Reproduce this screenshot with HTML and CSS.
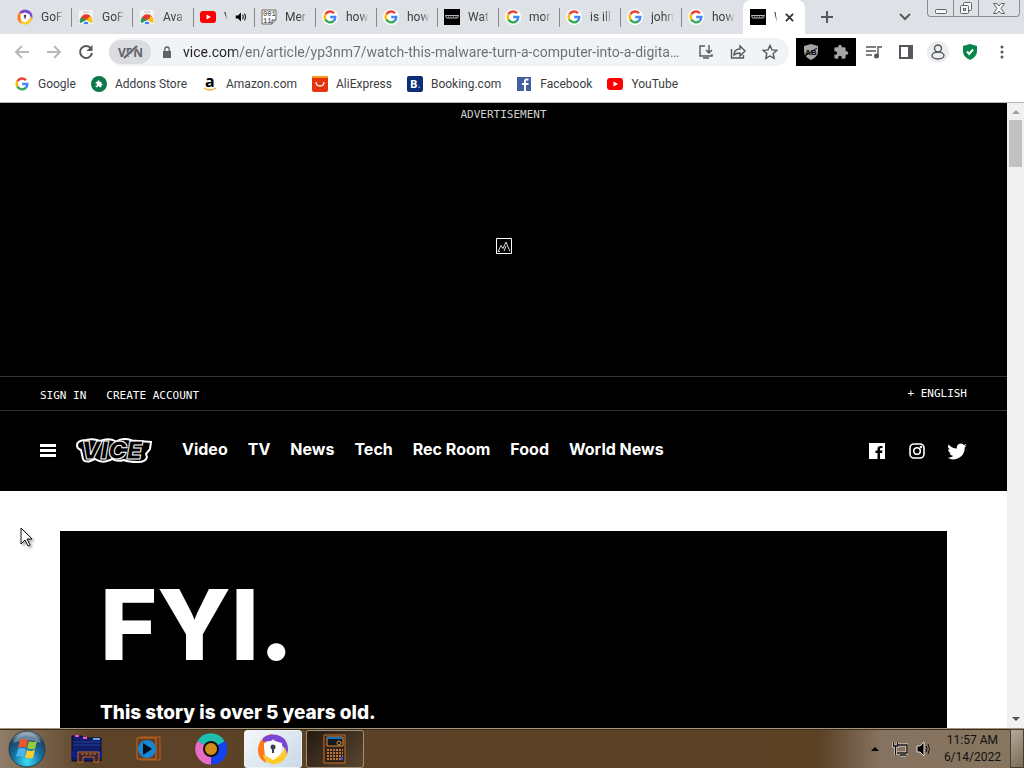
FILE: index.html
```html
<!DOCTYPE html>
<html lang="en">
<head>
<meta charset="utf-8">
<meta name="viewport" content="width=device-width, initial-scale=1">
<title>VICE</title>
<link rel="stylesheet" href="styles.css">
</head>
<body>
<svg class="sprite" aria-hidden="true">
  <symbol id="google" viewBox="0 0 16 16">
    <circle cx="8" cy="8" r="8" fill="#fff"/>
    <g fill="none" stroke-width="2.4">
      <path d="M12 4.2A5.3 5.3 0 0 0 3.4 5.3" stroke="#ea4335"/>
      <path d="M3.4 5.3a5.3 5.3 0 0 0 0 5.4" stroke="#fbbc05"/>
      <path d="M3.4 10.7a5.3 5.3 0 0 0 8.2 1.3" stroke="#34a853"/>
      <path d="M11.6 12a5.2 5.2 0 0 0 1.7-4H8.2" stroke="#4285f4"/>
    </g>
  </symbol>
  <symbol id="avast" viewBox="0 0 32 32">
    <path d="M16 1C9 1 1 7 1 17c0 6 3 10 8 13-2-8-2-16 0-21z" fill="#ff7a1a"/>
    <path d="M6 5C14-2 31 1 31 16c0 3-1 5-2 7C29 13 22 5 6 9z" fill="#7b45d6"/>
    <path d="M30 21C28 28 21 32 15 31c-5-1-8-4-9-9 9 5 19 3 22-8z" fill="#ffc928"/>
    <path d="M7 10q9-2 9-4 0 2 9 4 1 13-9 17Q6 23 7 10z" fill="#fff"/>
    <circle cx="16" cy="14" r="2.5" fill="#3a3c58"/><path d="M16 14v6" stroke="#3a3c58" stroke-width="2"/>
  </symbol>
  <symbol id="store" viewBox="0 0 16 16">
    <path d="M1 1h14v14H1z" fill="#f2f2f2"/><path d="M5 3h6" stroke="#c5c5c5"/>
    <path d="M2 14a6 6 0 0 1 3-7l3 5z" fill="#1f9d55"/>
    <path d="M3 9a5.500 5.500 0 0 1 10.500 0L8 11z" fill="#e33b2e"/>
    <path d="M14 14a6 6 0 0 0-2-7l-4 5z" fill="#fbc116"/>
    <path d="M5 15a3 3 0 0 1 6 0" fill="#4285f4" stroke="#fff"/>
  </symbol>
  <symbol id="youtube" viewBox="0 0 16 16">
    <rect y="2" width="16" height="12" rx="3" fill="#f00"/><path d="M6.500 5.500v5L11 8z" fill="#fff"/>
  </symbol>
  <symbol id="vice-mini" viewBox="0 0 16 16">
    <path d="M0 0h16v16H0z"/><path d="M1.500 6.500h13l-1 2.500H2.500z" fill="none" stroke="#ccc" stroke-width=".9"/><path d="M4 6l1 3M7 6v3M10 6l-1 3M11 8h2" stroke="#aaa" stroke-width=".7"/>
  </symbol>
  <symbol id="binary" viewBox="0 0 16 16">
    <path d="M1 1h14v10l-4 4H1z" fill="#fff" stroke="#666"/><path d="M11 15v-4h4" fill="#ccc" stroke="#555"/>
    <text x="2" y="7" font-family="Liberation Mono" font-size="7" fill="#222">001</text>
    <text x="2" y="14" font-family="Liberation Mono" font-size="7" fill="#222">11</text>
  </symbol>
  <symbol id="shield" viewBox="0 0 16 16"><path d="M8 0l7 2v5q0 6-7 9-7-3-7-9V2z"/></symbol>
  <symbol id="puzzle" viewBox="0 0 24 24"><path d="M20.500 11H19V7a2 2 0 0 0-2-2h-4V3.500a2.500 2.500 0 0 0-5 0V5H4a2 2 0 0 0-2 2v3.800h1.500a2.700 2.700 0 0 1 0 5.400H2V20a2 2 0 0 0 2 2h3.800v-1.500a2.700 2.700 0 0 1 5.400 0V22H17a2 2 0 0 0 2-2v-4h1.500a2.500 2.500 0 0 0 0-5z"/></symbol>
</svg>

<header class="browser">
  <div class="strip">
    <div class="tabs" role="tablist">
      <button class="tab" role="tab"><svg class="ico"><use href="#avast"/></svg><span class="name">GoF</span></button>
      <button class="tab" role="tab"><svg class="ico"><use href="#store"/></svg><span class="name">GoF</span></button>
      <button class="tab" role="tab"><svg class="ico"><use href="#store"/></svg><span class="name">Ava</span></button>
      <button class="tab" role="tab"><svg class="ico"><use href="#youtube"/></svg><span class="name sliver">V</span><svg class="sound" viewBox="0 0 16 16"><path d="M1 6h3l4-4v12l-4-4H1z"/><path d="M10 5q2 3 0 6M12.500 3.500q3 4.500 0 9" fill="none" stroke="#222" stroke-width="1.500"/></svg></button>
      <button class="tab" role="tab"><svg class="ico"><use href="#binary"/></svg><span class="name">Mer</span></button>
      <button class="tab" role="tab"><svg class="ico"><use href="#google"/></svg><span class="name">how</span></button>
      <button class="tab" role="tab"><svg class="ico"><use href="#google"/></svg><span class="name">how</span></button>
      <button class="tab" role="tab"><svg class="ico"><use href="#vice-mini"/></svg><span class="name">Wat</span></button>
      <button class="tab" role="tab"><svg class="ico"><use href="#google"/></svg><span class="name">mor</span></button>
      <button class="tab" role="tab"><svg class="ico"><use href="#google"/></svg><span class="name">is ill</span></button>
      <button class="tab" role="tab"><svg class="ico"><use href="#google"/></svg><span class="name">john</span></button>
      <button class="tab last" role="tab"><svg class="ico"><use href="#google"/></svg><span class="name">how</span></button>
      <button class="tab active" role="tab" aria-selected="true"><svg class="ico"><use href="#vice-mini"/></svg><span class="name sliver">W</span><svg class="close" viewBox="0 0 10 10"><path d="M1 1l8 8M9 1L1 9"/></svg></button>
    </div>
    <button class="plain newtab" aria-label="New tab"><svg width="12" height="12" viewBox="0 0 12 12"><path d="M6 0v12M0 6h12"/></svg></button>
    <button class="plain search-tabs" aria-label="Search tabs"><svg width="12" height="8" viewBox="0 0 12 8"><path d="M1 1l5 5 5-5"/></svg></button>
    <div class="window-buttons">
      <button aria-label="Minimize"><svg width="14" height="14" viewBox="0 0 14 14"><rect x="1.500" y="8.500" width="11" height="4" rx="1"/></svg></button>
      <button aria-label="Restore"><svg width="14" height="14" viewBox="0 0 14 14"><rect x="4.500" y="1.500" width="8" height="8" rx="1"/><rect x="1.500" y="4.500" width="8" height="8" rx="1"/><rect x="4.500" y="7.500" width="2" height="2"/></svg></button>
      <button class="wide" aria-label="Close"><svg width="14" height="14" viewBox="0 0 14 14"><path d="M1.500 2.500h3.500l2 2.500 2-2.500h3.500l-3.500 5 3.500 5H9l-2-2.500-2 2.500H1.500l3.500-5z"/></svg></button>
    </div>
  </div>

  <div class="toolbar">
    <button class="plain muted" aria-label="Back"><svg width="16" height="16" viewBox="0 0 16 16"><path d="M15 8H2M8 2L2 8l6 6"/></svg></button>
    <button class="plain muted" aria-label="Forward"><svg width="16" height="16" viewBox="0 0 16 16"><path d="M1 8h13M8 2l6 6-6 6"/></svg></button>
    <button class="plain" aria-label="Reload"><svg width="16" height="16" viewBox="0 0 16 16"><path d="M13 4.500A6 6 0 1 0 14 9"/><path d="M14.500 1v6h-6z" class="fill"/></svg></button>
    <div class="omnibox">
      <button class="vpn" aria-label="VPN off"><svg width="28" height="16" viewBox="0 0 28 16"><text x="2" y="13" font-family="Open Sans" font-weight="700" font-size="12" fill="#5f6368">VPN</text><path d="M8 14L21 2" stroke="#dadce0" stroke-width="3"/><path d="M8 14L21 2" stroke="#5f6368" stroke-width="2"/></svg></button>
      <svg class="lock" viewBox="0 0 8 12"><path d="M0 5h8v7H0z" fill="#5f6368"/><path d="M1.800 5V3.200a2.200 2.200 0 0 1 4.400 0V5" fill="none" stroke="#5f6368" stroke-width="1.300"/></svg>
      <input class="url" aria-label="Address" value="vice.com/en/article/yp3nm7/watch-this-malware-turn-a-computer-into-a-digital-hellscape">
      <button class="plain" aria-label="Install"><svg width="16" height="16" viewBox="0 0 16 16" class="thin"><path d="M7 2H2v10h12v-2M5 14h6M11 1v8M8 6l3 3 3-3"/></svg></button>
      <button class="plain" aria-label="Share"><svg width="16" height="16" viewBox="0 0 16 16" class="thin"><path d="M1.500 5v9h12v-3M4 11q0-6 6-6V2l5 5-5 5V9q-4 0-6 2z"/></svg></button>
      <button class="plain" aria-label="Bookmark"><svg width="16" height="16" viewBox="0 0 16 16" class="thin"><path d="M8 1.500l2 4.400 4.700.5-3.500 3.200 1 4.800L8 12l-4.200 2.400 1-4.800L1.300 6.400 6 5.900z"/></svg></button>
    </div>
    <div class="extensions">
      <button class="plain" aria-label="Ad blocker"><svg width="16" height="16" viewBox="0 0 16 16"><use href="#shield" class="gray"/><text x="2" y="11" font-family="Liberation Sans" font-weight="700" font-size="8">AB</text><path d="M2 12L14 4" class="slash"/></svg></button>
      <button class="plain" aria-label="Extensions"><svg width="16" height="16" class="gray"><use href="#puzzle"/></svg></button>
    </div>
    <div class="tools">
      <button class="plain" aria-label="Media"><svg width="18" height="16" viewBox="0 0 18 16" class="thin"><path d="M1 3h10M1 7h10M1 11h6M13 12V3h4"/><circle cx="11.500" cy="12" r="2.500" class="fill"/></svg></button>
      <button class="plain" aria-label="Side panel"><svg width="16" height="16" viewBox="0 0 16 16"><path d="M2 2h12v12H2z"/><path d="M10 2h4v12h-4z" class="fill"/></svg></button>
      <button class="plain" aria-label="Profile"><svg width="22" height="22" viewBox="0 0 22 22" class="thin"><circle cx="11" cy="11" r="11" fill="#eceef0" stroke="none"/><circle cx="11" cy="7.500" r="3.500"/><ellipse cx="11" cy="14.500" rx="6" ry="3.500"/></svg></button>
      <button class="plain" aria-label="Protection"><svg width="16" height="16" viewBox="0 0 16 16"><use href="#shield" class="green"/><path d="M5 7.500l2.200 2.500L11 5.500" class="check"/></svg></button>
      <button class="plain" aria-label="Menu"><svg width="16" height="16" viewBox="0 0 16 16"><g class="fill"><circle cx="8" cy="3" r="1.500"/><circle cx="8" cy="8" r="1.500"/><circle cx="8" cy="13" r="1.500"/></g></svg></button>
    </div>
  </div>

  <nav class="bookmarks" aria-label="Bookmarks">
    <a href="#"><svg class="ico"><use href="#google"/></svg>Google</a>
    <a href="#"><svg class="ico" viewBox="0 0 16 16"><circle cx="8" cy="8" r="8" fill="#0b7a4b"/><use href="#puzzle" x="4" y="4" width="8" height="8" fill="#fff"/></svg>Addons Store</a>
    <a href="#"><svg class="ico" viewBox="0 0 16 16"><text x="3" y="11" font-family="Open Sans" font-weight="700" font-size="16">a</text><path d="M2 12q6 4 12 0" fill="none" stroke="#f3a61c" stroke-width="1.300"/></svg>Amazon.com</a>
    <a href="#"><svg class="ico" viewBox="0 0 16 16"><rect width="16" height="16" rx="2" fill="#e5330b"/><path d="M0 2q0-2 2-2h12q2 0 2 2z" fill="#f7991c"/><path d="M4 6q0 4 4 4t4-4" fill="none" stroke="#fff" stroke-width="1.300"/></svg>AliExpress</a>
    <a href="#"><svg class="ico" viewBox="0 0 16 16"><rect width="16" height="16" rx="2" fill="#0c2d78"/><text x="3" y="12" font-family="Open Sans" font-weight="700" font-size="11" fill="#fff">B<tspan fill="#38a5e8">.</tspan></text></svg>Booking.com</a>
    <a href="#"><svg class="ico" viewBox="0 0 16 16"><path d="M1 1h14v14H1z" fill="#4460a0"/><path d="M10 15V9h2.500V7H10V5.500q0-1 1-1h1.500v-2H11Q8 2.500 8 5.200V7H6v2h2v6z" fill="#fff"/></svg>Facebook</a>
    <a href="#"><svg class="ico"><use href="#youtube"/></svg>YouTube</a>
  </nav>
</header>

<div class="view">
  <div class="site">
    <section class="ad">
      <p>ADVERTISEMENT</p>
      <div class="slot"><svg width="16" height="16" viewBox="0 0 16 16" fill="none" stroke="#ddd"><path d="M.5.5h15v15H.5z" stroke="#fff"/><path d="M2 13.500l3-6 2 3 3-6.500 4 9.500M2 13.500h2M8 13l2-5"/></svg></div>
    </section>
    <div class="account">
      <a href="#">SIGN IN</a><a href="#">CREATE ACCOUNT</a><button class="lang">+ ENGLISH</button>
    </div>
    <header class="masthead">
      <button class="burger" aria-label="Menu"><svg width="16" height="13" viewBox="0 0 16 13"><path d="M0 0h16v3H0zM0 5h16v3H0zM0 10h16v3H0z" fill="#fff"/></svg></button>
      <a class="logo" href="#" aria-label="VICE"><svg width="76" height="26" viewBox="0 0 76 26"><path d="M10 2Q1 2 1 7.500q0 3 4 4.500l2 9q1 3 6 2.500l6-2.500q6 4 12 2 4-1 5-2 5 3 12 1 4 2 14 2 8 0 9-5l-1-3 4-5 1-7-19-1.500Q48-1 40 3.500q-7-4-16-.5Q18 0 10 2z" fill="#000" stroke="#fff" stroke-width="2"/><text x="5" y="21" font-family="Inter" font-weight="900" font-style="italic" font-size="25" fill="#000" stroke="#fff" stroke-width="1">VICE</text></svg></a>
      <nav class="sections" aria-label="Sections">
        <a href="#">Video</a><a href="#">TV</a><a href="#">News</a><a href="#">Tech</a><a href="#">Rec Room</a><a href="#">Food</a><a href="#">World News</a>
      </nav>
      <nav class="social" aria-label="Social">
        <a href="#" aria-label="Facebook"><svg width="16" height="16" viewBox="0 0 16 16"><path d="M0 0h16v16h-5v-6h2l.5-2.500H11V6q0-1 1-1h1.500V3H11.500Q8.500 3 8.500 5.800v1.700h-2V10h2v6H0z" fill="#fff"/></svg></a>
        <a href="#" aria-label="Instagram"><svg width="16" height="16" viewBox="0 0 16 16" fill="none" stroke="#fff" stroke-width="1.600"><rect x="1" y="1" width="14" height="14" rx="4"/><circle cx="8" cy="8" r="3.300"/><circle cx="12" cy="4" r=".5"/></svg></a>
        <a href="#" aria-label="Twitter"><svg width="20" height="17" viewBox="0 1.500 24 21"><path d="M24 4.600c-.9.400-1.800.7-2.800.8 1-.6 1.800-1.600 2.200-2.700-1 .6-2 1-3.100 1.200A4.900 4.900 0 0 0 11.900 8.400C7.800 8.200 4.200 6.300 1.700 3.200A4.900 4.900 0 0 0 3.200 9.700c-.8 0-1.600-.2-2.200-.6 0 2.300 1.600 4.400 3.900 4.900-.7.200-1.500.2-2.200.1a4.900 4.900 0 0 0 4.600 3.400A9.900 9.900 0 0 1 0 19.500 14 14 0 0 0 21.500 7.100c1-.7 1.800-1.600 2.500-2.500z" fill="#fff"/></svg></a>
      </nav>
    </header>
    <main class="page">
      <section class="notice">
        <h1>FYI.</h1>
        <p>This story is over 5 years old.</p>
      </section>
    </main>
  </div>
  <div class="scrollbar" aria-hidden="true"><i class="up"></i><i class="thumb"></i><i class="down"></i></div>
  <svg class="cursor" width="14" height="22" viewBox="0 0 14 22"><path d="M1 1v16l4-4 3 6 2-1-3-6h5z" fill="#fff" stroke="#111"/></svg>
</div>

<footer class="taskbar">
  <button class="start" aria-label="Start"><svg width="38" height="38" viewBox="0 0 38 38"><defs><radialGradient id="orb" cx=".5" cy=".85" r=".85"><stop offset="0" stop-color="#3fe0f5"/><stop offset=".45" stop-color="#1674a8"/><stop offset=".8" stop-color="#1b4264"/><stop offset="1" stop-color="#a9bcc4"/></radialGradient></defs><circle cx="19" cy="19" r="18" fill="url(#orb)" stroke="#263d4b"/><path d="M5 13Q9 3 19 3t14 10q-14-6-28 0z" fill="#fff" opacity=".35"/><path d="M12 10q4-2 8 0l-2 8q-4-2-8 0z" fill="#f0582a"/><path d="M21 11q4 2 8 0l-2 8q-4 1-8-1z" fill="#98c93c"/><path d="M10 19q3-2 8 0l-2 8q-4-2-8 0z" fill="#4cb5ec"/><path d="M19 20q3 2 8 0l-2 8q-4 1-8-1z" fill="#fecb2f"/></svg></button>
  <div class="tasks">
    <button class="task" aria-label="Explorer"><svg width="34" height="30" viewBox="0 0 34 30"><path d="M2 2h10l2 2h17v23H2z" fill="#101d68" stroke="#070b2c"/><path d="M3 8h28M3 11h28" stroke="#28419b"/><path d="M5 2h4M13 4h4" stroke="#ef50df" stroke-width="2"/><path d="M23 5h7" stroke="#5fa0e8" stroke-width="2"/><path d="M2 17h30v6H2z" fill="#071d91"/><path d="M8 28V18h21v10h-5v-5H13v5z" fill="#3c2430" stroke="#c96a1f"/><path d="M11 20h15" stroke="#d9782a" stroke-dasharray="3 1"/></svg></button>
    <button class="task" aria-label="Media player"><svg width="26" height="26" viewBox="0 0 26 26"><path d="M4 1h20v23H4" fill="#70401c" stroke="#b75d20"/><path d="M1 2h19v21H1z" fill="#5b402a" stroke="#d0661c"/><circle cx="11" cy="13" r="9" fill="#1687d5"/><path d="M7 7v12l9-6z" fill="#080d14"/></svg></button>
    <button class="task" aria-label="Chrome"><svg width="32" height="32" viewBox="0 0 32 32"><path d="M16 16L2.500 8A15.500 15.500 0 0 1 30 9z" fill="#1ebfae"/><path d="M16 16L30 8a15.500 15.500 0 0 1-14 23.500z" fill="#1442ee"/><path d="M16 16v15.500A15.500 15.500 0 0 1 2.500 8z" fill="#e66cc6"/><circle cx="16" cy="16" r="7" fill="#d48a1c" stroke="#111" stroke-width="2"/></svg></button>
    <button class="task current" aria-label="Secure Browser"><svg width="32" height="32"><use href="#avast"/></svg></button>
    <button class="task open" aria-label="Calculator"><svg width="24" height="30" viewBox="0 0 24 30"><path d="M1 1h21v28H1z" fill="#302319" stroke="#c97327"/><path d="M4 3h16v9H4z" fill="#151a20" stroke="#e0923e"/><path d="M4 3h15v2H4z" fill="#1674b8"/><circle cx="16" cy="9" r="2" fill="none" stroke="#e0923e"/><path d="M4 16h16M4 19h16M4 22h16M4 25h16" stroke="#b8743a" stroke-width="2" stroke-dasharray="2 1"/><path d="M18 22h2v4h-2z" fill="#2d46e8"/></svg></button>
  </div>
  <div class="tray">
    <svg width="8" height="4" viewBox="0 0 8 4"><path d="M0 4l4-4 4 4z"/></svg>
    <svg class="net" width="16" height="16" viewBox="0 0 16 16" fill="none" stroke="#e6ddd0" stroke-width="3"><path d="M5 4h10v8H5M8 14h6M1.500 1v4h4V1M3.500 5v9"/><path d="M5 4h10v8H5M8 14h6M1.500 1v4h4V1M3.500 5v9" stroke="#111" stroke-width="1.400"/></svg>
    <svg class="vol" width="16" height="16" viewBox="0 0 16 16"><path d="M1 5h3l4-4v14l-4-4H1z" stroke="#ddd"/><path d="M10 5q2 3 0 6M12 3q3 5 0 10" fill="none" stroke="#111"/></svg>
    <time class="clock">11:57 AM<br>6/14/2022</time>
    <button class="desktop" aria-label="Show desktop"></button>
  </div>
</footer>
</body>
</html>
```
FILE: styles.css
```css
* { box-sizing: border-box; }
body { margin: 0; height: 100vh; display: flex; flex-direction: column; overflow: hidden; background: #fff; font: 12px/16px Roboto, "Noto Sans", sans-serif; color: #3c4043; }
button { margin: 0; padding: 0; border: 0; background: none; font: inherit; color: inherit; }
a { color: inherit; text-decoration: none; }
p, h1 { margin: 0; }
svg { display: block; flex: none; }
.sprite { position: absolute; width: 0; height: 0; }
.ico { width: 16px; height: 16px; }

/* Browser window */
.browser { flex: none; border-bottom: 1px solid #b8b8b8; }
.strip { display: flex; align-items: center; height: 34px; padding: 0 4px 0 11px; background: #dee1e6; }
.tabs { display: flex; flex: 0 1 794px; align-self: stretch; min-width: 0; }
.tab { position: relative; display: flex; flex: 1 1 0; align-items: center; min-width: 0; gap: 8px; padding: 0 8px 0 6px; }
.tab:not(.last):not(.active)::after { content: ""; position: absolute; right: 0; top: 8px; width: 1px; height: 19px; background: #85888d; }
.name { flex: 1 1 0; min-width: 0; overflow: hidden; white-space: nowrap; text-align: left; mask-image: linear-gradient(90deg, #000 60%, transparent); }
.sliver { flex: 0 0 3px; }
.sound { width: 12px; height: 12px; }
.tab.active { background: #fff; border-radius: 8px 8px 0 0; padding-left: 7px; }
.close { width: 9px; height: 9px; stroke: #333; stroke-width: 2; }
.plain { display: flex; align-items: center; justify-content: center; flex: none; width: 32px; height: 28px; }
.plain svg { fill: none; stroke: #54585c; stroke-width: 2; }
.plain svg.thin { stroke-width: 1.4; }
.plain text { fill: #000; stroke: none; }
.plain .fill { fill: #54585c; stroke: none; }
.plain .gray { fill: #a5a5a5; stroke: none; }
.plain .green { fill: #07854a; stroke: none; }
.slash { stroke: #000; stroke-width: 1; }
.check { stroke: #fff; }
.muted svg { stroke: #b6b8ba; }
.newtab { margin-left: 6px; }
.search-tabs { margin-left: auto; margin-right: 6px; }
.window-buttons { display: flex; align-self: flex-start; height: 17px; border: 1px solid #8a8e94; border-top: 0; border-radius: 0 0 4px 4px; }
.window-buttons button { display: grid; place-items: center; width: 25px; }
.window-buttons button + button { border-left: 1px solid #8a8e94; }
.window-buttons .wide { width: 41px; }
.window-buttons svg { fill: #f7f7f7; stroke: #60646a; }

.toolbar { display: flex; align-items: center; height: 35px; padding: 0 6px; }
.omnibox { display: flex; align-items: center; flex: 1; min-width: 0; height: 28px; margin: 0 7px; border-radius: 14px; background: #f1f3f4; }
.vpn { display: grid; place-items: center; flex: none; width: 42px; height: 24px; border-radius: 12px; background: #dadce0; }
.lock { width: 8px; height: 12px; margin: 0 12px; }
.url { flex: 1; min-width: 0; height: 24px; padding: 0; border: 0; outline: 0; font: 14px/24px Roboto, "Noto Sans", sans-serif; text-overflow: ellipsis; color: transparent; background: linear-gradient(90deg, #202124 54px, #6a6e73 54px); background-clip: text; }
.omnibox .url + .plain { margin-left: 8px; }
.omnibox .plain:last-child { margin-right: 3px; }
.extensions { display: flex; flex: none; width: 60px; background: #000; }
.extensions .plain { width: 30px; }
.tools { display: flex; flex: none; margin-left: 2px; }

.bookmarks { display: flex; align-items: center; gap: 15px; height: 33px; padding: 0 14px 3px; overflow: hidden; }
.bookmarks a { display: flex; align-items: center; gap: 8px; white-space: nowrap; }

/* Page */
.view { position: relative; display: flex; flex: 1; min-height: 0; overflow: hidden; }
.site { flex: 1; min-width: 0; overflow: hidden; color: #fff; font-family: Inter, "Liberation Sans", sans-serif; }
.ad { background: #000; padding: 5px 0 4px; font: 11px/14px "DejaVu Sans Mono", monospace; text-align: center; color: #d0d0d0; }
.slot { display: grid; place-items: center; height: 250px; padding-bottom: 2px; }
.account { display: flex; align-items: center; gap: 20px; height: 35px; padding: 4px 40px 0; border: solid #333; border-width: 1px 0; background: #000; font: 11px/14px "DejaVu Sans Mono", monospace; white-space: nowrap; }
.lang { margin-left: auto; padding-bottom: 3px; }
.masthead { display: flex; align-items: center; height: 80px; padding: 0 40px; background: #000; }
.burger { padding-bottom: 2px; }
.logo { margin: 0 30px 0 20px; }
.sections { display: flex; gap: 20px; font-size: 16px; line-height: 24px; font-weight: 700; white-space: nowrap; padding-bottom: 4px; }
.social { display: flex; align-items: center; gap: 24px; margin-left: auto; }
.social a:last-child { margin-left: -2px; }
.page { padding: 40px 60px; background: #fff; }
.notice { padding: 40px; background: #000; }
.notice h1 { font-size: 98px; line-height: 108px; font-weight: 800; }
.notice p { margin-top: 18px; font-size: 19px; line-height: 32px; font-weight: 800; }
.scrollbar { display: flex; flex-direction: column; align-items: center; flex: none; width: 17px; padding: 7px 0; background: #f1f1f1; }
.up, .down { border: solid transparent; border-width: 0 4px 4px; border-bottom-color: #a0a0a0; }
.thumb { width: 13px; height: 47px; margin-top: 6px; background: #c1c1c1; }
.down { margin-top: auto; border-width: 4px 4px 0; border-top-color: #505050; }
.cursor { position: absolute; left: 20px; top: 424px; filter: drop-shadow(2px 2px 1px #0005); }

/* Taskbar */
.taskbar { display: flex; align-items: center; flex: none; height: 40px; padding-left: 8px; border-top: 1px solid #a3957f; box-shadow: inset 0 1px #3a2a18; background: linear-gradient(90deg, #8f7d69, #5c4226 90px, #5c4225 820px, #857260 880px, #87765f); }
.start { flex: none; }
.tasks { display: flex; align-items: center; gap: 4px; margin-left: 12px; }
.task { display: grid; place-items: center; width: 58px; height: 38px; border-radius: 3px; }
.current { background: linear-gradient(135deg, #f4f7fa, #c9d9e6); border: 1px solid #eef3f7; }
.open { border: 1px solid #a08e76; background: linear-gradient(135deg, #251a10, #5a4630); }
.tray { display: flex; align-items: center; align-self: stretch; margin-left: auto; color: #111; }
.net { margin-left: 13px; }
.vol { margin: 0 12px 0 8px; }
.clock { line-height: 17px; text-align: center; }
.desktop { align-self: stretch; width: 14px; margin-left: 9px; border: 1px solid #4b3d2e; background: linear-gradient(135deg, #b6aa9a, #796a58); }
```
